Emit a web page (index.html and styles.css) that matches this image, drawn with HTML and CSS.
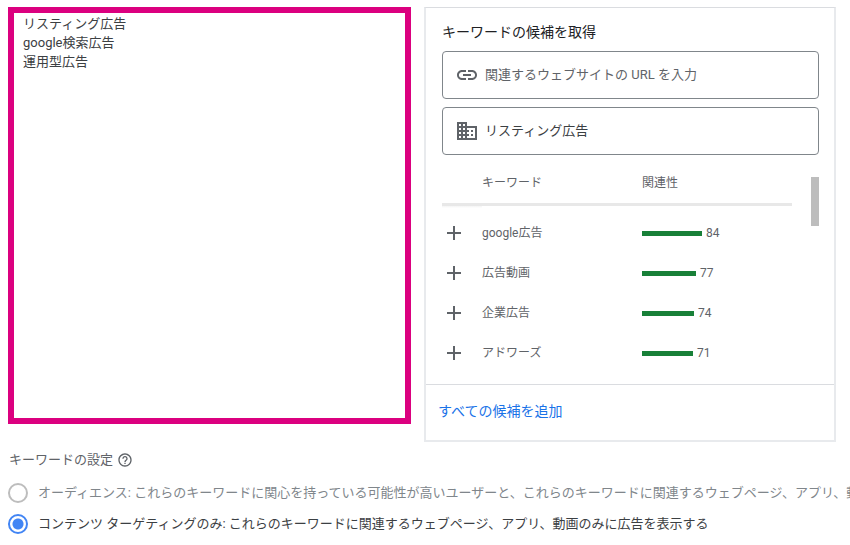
FILE: index.html
```html
<!DOCTYPE html>
<html lang="ja">
<head>
<meta charset="utf-8">
<meta name="viewport" content="width=device-width, initial-scale=1">
<title>キーワードの設定</title>
<link rel="stylesheet" href="styles.css">
</head>
<body>
<main class="page">
  <div class="editor">
    <textarea class="keywords" aria-label="キーワード" spellcheck="false">リスティング広告
google検索広告
運用型広告</textarea>
    <section class="card">
      <div class="card-body">
        <h2 class="card-title">キーワードの候補を取得</h2>
        <label class="field">
          <svg class="field-icon" viewBox="0 0 24 24" aria-hidden="true"><path d="M3.9 12c0-1.71 1.39-3.1 3.1-3.1h4V7H7c-2.76 0-5 2.24-5 5s2.24 5 5 5h4v-1.9H7c-1.71 0-3.1-1.39-3.1-3.1zM8 13h8v-2H8v2zm9-6h-4v1.9h4c1.71 0 3.1 1.39 3.1 3.1s-1.39 3.1-3.1 3.1h-4V17h4c2.76 0 5-2.24 5-5s-2.24-5-5-5z"/></svg>
          <input class="field-input" type="text" placeholder="関連するウェブサイトの URL を入力" aria-label="関連するウェブサイトの URL を入力">
        </label>
        <label class="field">
          <svg class="field-icon" viewBox="0 0 24 24" aria-hidden="true"><path d="M12 7V3H2v18h20V7H12zM6 19H4v-2h2v2zm0-4H4v-2h2v2zm0-4H4V9h2v2zm0-4H4V5h2v2zm4 12H8v-2h2v2zm0-4H8v-2h2v2zm0-4H8V9h2v2zm0-4H8V5h2v2zm10 12h-8v-2h2v-2h-2v-2h2v-2h-2V9h8v10zm-2-8h-2v2h2v-2zm0 4h-2v2h2v-2z"/></svg>
          <input class="field-input" type="text" value="リスティング広告" aria-label="商品やサービス">
        </label>
        <div class="ideas">
          <table class="ideas-table">
            <thead>
              <tr><td class="col-add"></td><th class="col-word" scope="col">キーワード</th><th scope="col">関連性</th></tr>
            </thead>
            <tbody>
              <tr>
                <td><button class="add" type="button" aria-label="google広告を追加"><svg viewBox="0 0 16 16"><path d="M8 1v14M1 8h14"/></svg></button></td>
                <td>google広告</td>
                <td><div class="score"><span class="bar" style="width:60px"></span>84</div></td>
              </tr>
              <tr>
                <td><button class="add" type="button" aria-label="広告動画を追加"><svg viewBox="0 0 16 16"><path d="M8 1v14M1 8h14"/></svg></button></td>
                <td>広告動画</td>
                <td><div class="score"><span class="bar" style="width:54px"></span>77</div></td>
              </tr>
              <tr>
                <td><button class="add" type="button" aria-label="企業広告を追加"><svg viewBox="0 0 16 16"><path d="M8 1v14M1 8h14"/></svg></button></td>
                <td>企業広告</td>
                <td><div class="score"><span class="bar" style="width:52px"></span>74</div></td>
              </tr>
              <tr>
                <td><button class="add" type="button" aria-label="アドワーズを追加"><svg viewBox="0 0 16 16"><path d="M8 1v14M1 8h14"/></svg></button></td>
                <td>アドワーズ</td>
                <td><div class="score"><span class="bar" style="width:51px"></span>71</div></td>
              </tr>
            </tbody>
          </table>
          <div class="scroll-thumb"></div>
        </div>
      </div>
      <div class="card-footer"><a class="add-all" href="#">すべての候補を追加</a></div>
    </section>
  </div>

  <fieldset class="settings">
    <legend class="settings-title">キーワードの設定
      <svg class="help" viewBox="0 0 24 24" aria-hidden="true"><path d="M11 18h2v-2h-2v2zm1-16C6.48 2 2 6.48 2 12s4.48 10 10 10 10-4.48 10-10S17.52 2 12 2zm0 18c-4.41 0-8-3.59-8-8s3.59-8 8-8 8 3.59 8 8-3.59 8-8 8zm0-14c-2.21 0-4 1.79-4 4h2c0-1.1.9-2 2-2s2 .9 2 2c0 2-3 1.75-3 5h2c0-2.25 3-2.5 3-5 0-2.21-1.79-4-4-4z"/></svg>
    </legend>
    <label class="option option-muted"><input class="radio" type="radio" name="mode">オーディエンス: これらのキーワードに関心を持っている可能性が高いユーザーと、これらのキーワードに関連するウェブページ、アプリ、動</label>
    <label class="option"><input class="radio" type="radio" name="mode" checked>コンテンツ ターゲティングのみ: これらのキーワードに関連するウェブページ、アプリ、動画のみに広告を表示する</label>
  </fieldset>
</main>
</body>
</html>
```
FILE: styles.css
```css
* {
  box-sizing: border-box;
}

body {
  margin: 0;
  background: #fff;
  color: #3c4043;
  font-family: Roboto, "Noto Sans CJK JP", sans-serif;
  font-size: 13px;
  line-height: 20px;
}

.page {
  padding: 7px 0 0 8px;
  overflow: hidden;
}

.editor {
  display: grid;
  grid-template-columns: 403fr 412fr;
  gap: 13px;
  align-items: start;
  margin-right: 14px;
}

.keywords {
  display: block;
  width: 100%;
  height: 417px;
  padding: 1px 9px;
  border: 6px solid #db007f;
  outline: 0;
  resize: none;
  color: #3c4043;
  font: inherit;
  line-height: 19px;
}

.card {
  border: 2px solid #e8eaed;
  border-top: 1px solid #dadce0;
}

.card-body {
  padding: 14px 15px 11px 16px;
}

.card-title {
  margin: 0 0 9px;
  color: #202124;
  font-size: 14px;
  font-weight: 400;
}

.field {
  display: flex;
  align-items: center;
  gap: 6px;
  height: 48px;
  margin-bottom: 8px;
  padding: 0 12px;
  border: 1px solid #80868b;
  border-radius: 4px;
}

.field-icon {
  flex: none;
  width: 24px;
  height: 24px;
  fill: #5f6368;
}

.field-input {
  flex: 1;
  min-width: 0;
  padding: 0;
  border: 0;
  outline: 0;
  background: none;
  color: #3c4043;
  font: inherit;
}

.field-input::placeholder {
  color: #5f6368;
}

.ideas {
  display: flex;
  align-items: flex-start;
  gap: 19px;
}

.ideas-table {
  flex: 1;
  table-layout: fixed;
  border-spacing: 0;
  color: #5f6368;
  font-size: 12px;
}

.ideas-table th,
.ideas-table td {
  height: 40px;
  padding: 0;
  font-weight: 400;
  text-align: left;
}

.ideas-table thead th,
.ideas-table thead td {
  height: 43px;
  border-bottom: 3px solid #e8e8e8;
}

.ideas-table tbody::before {
  content: "";
  display: block;
  height: 7px;
  background: linear-gradient(#f4f4f4, #fff 2px);
}

.col-add {
  width: 40px;
}

.col-word {
  width: 160px;
}

.add {
  display: block;
  width: 24px;
  height: 24px;
  padding: 4px;
  border: 0;
  background: none;
}

.add svg {
  display: block;
  width: 16px;
  height: 16px;
  fill: none;
  stroke: #5f6368;
  stroke-width: 2;
}

.score {
  display: flex;
  align-items: center;
  gap: 4px;
}

.bar {
  height: 5px;
  background: #188038;
}

.scroll-thumb {
  width: 8px;
  height: 49px;
  margin-top: 14px;
  background: #bdbdbd;
}

.card-footer {
  padding: 16px 12px 19px;
  border-top: 1px solid #dadce0;
}

.add-all {
  display: block;
  color: #1a73e8;
  font-size: 14px;
  text-decoration: none;
}

.settings {
  min-width: 0;
  margin: 8px 0 0;
  padding: 0;
  border: 0;
}

.settings-title {
  display: flex;
  align-items: center;
  gap: 4px;
  padding: 0 1px;
  margin-bottom: 7px;
  color: #5f6368;
}

.help {
  width: 16px;
  height: 16px;
  fill: #5f6368;
}

.option {
  display: flex;
  align-items: center;
  gap: 10px;
  height: 31px;
  white-space: nowrap;
}

.option-muted {
  color: #80868b;
}

.radio {
  appearance: none;
  flex: none;
  width: 20px;
  height: 20px;
  margin: 0;
  border: 2px solid #bdbdbd;
  border-radius: 50%;
}

.radio:checked {
  border-color: #4285f4;
  background: radial-gradient(circle, #4285f4 5px, #fff 6px);
}
```
